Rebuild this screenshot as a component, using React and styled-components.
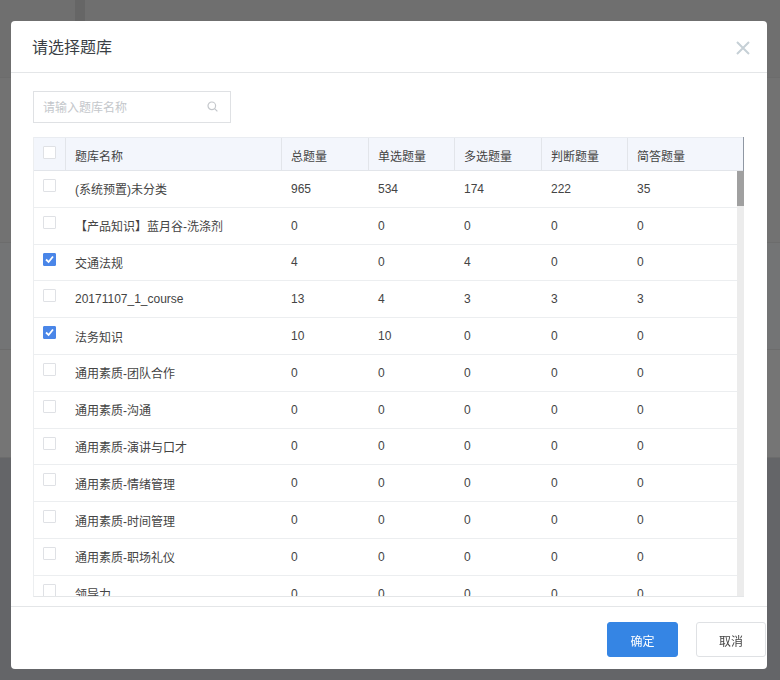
import React from 'react'
import styled, { createGlobalStyle } from 'styled-components'

const GlobalStyle = createGlobalStyle`
	html, body {
		margin: 0;
		padding: 0;
		height: 100%;
		overflow: hidden;
		background: #646568;
	}
	* {
		box-sizing: border-box;
	}
`

const Page = styled.div`
	height: 680px;
	display: flex;
	flex-direction: column;
	background: #646568;
`

const PageSection = styled.div`
	height: ${p => p.$h}px;
	background: ${p => p.$bg};
	border-bottom: 1px solid #6c6c6c;
	padding-left: 73px;
`

const PageStrip = styled.div`
	width: 14px;
	height: 22px;
	background: #666;
	border: solid #6f6f6f;
	border-width: 0 2px;
`

const Dialog = styled.div`
	position: fixed;
	left: 11px;
	top: 21px;
	width: 756px;
	height: 648px;
	background: #fff;
	border-radius: 4px;
	display: flex;
	flex-direction: column;
	font-family: 'Liberation Sans', 'Noto Sans CJK SC', sans-serif;
	color: #333;
`

const DialogHeader = styled.div`
	height: 52px;
	flex: none;
	display: flex;
	align-items: center;
	justify-content: space-between;
	padding: 0 16px 0 21px;
	border-bottom: 1px solid #e4e6e8;
`

const Title = styled.h3`
	margin: 0 0 2px;
	font-size: 16px;
	font-weight: 400;
	color: #3a3f45;
`

const CloseButton = styled.button`
	width: 16px;
	height: 16px;
	padding: 0;
	margin-top: 3px;
	border: 0;
	background: none;
	color: #c6d0d6;
	display: flex;
`

const DialogBody = styled.div`
	flex: 1;
	min-height: 0;
	padding: 18px 22px 9px;
	display: flex;
	flex-direction: column;
	border-bottom: 1px solid #e4e6e8;
`

const SearchBox = styled.div`
	width: 198px;
	height: 32px;
	flex: none;
	border: 1px solid #dfe1e4;
	display: flex;
	align-items: center;
	justify-content: space-between;
	padding: 0 12px 0 9px;
	margin-bottom: 14px;
	color: #c4c7cb;
`

const SearchInput = styled.input`
	width: 140px;
	border: 0;
	outline: 0;
	padding: 2px 0 0;
	font: inherit;
	font-size: 12px;
	color: #333;
	&::placeholder {
		color: #c4c7cb;
		opacity: 1;
	}
`

const SearchIcon = styled.svg`
	margin-bottom: 2px;
`

const TableWrap = styled.div`
	position: relative;
	flex: 1;
	min-height: 0;
	overflow: hidden;
	border-left: 1px solid #eceef0;
	border-bottom: 1px solid #e4e6e8;
	width: 711px;
`

const Row = styled.div`
	display: grid;
	grid-template-columns: 31px 216px 87px 86px 87px 86px 1fr;
	height: ${p => (p.$head ? '34px' : '36.8px')};
	background: ${p => (p.$head ? '#f3f6fc' : '#fff')};
	border-bottom: 1px solid ${p => (p.$head ? '#e2e5ea' : '#eceef0')};
	border-top: ${p => (p.$head ? '1px solid #e9ecf1' : '0')};
	font-size: 12px;
	margin-right: ${p => (p.$head ? '0' : '7px')};
`

const Cell = styled.div`
	display: flex;
	align-items: center;
	padding: 0 0 0 10px;
	white-space: pre;
	color: #444;
`

const HeadCell = styled(Cell)`
	padding: 3px 0 0 9px;
	border-left: 1px solid #e2e5ea;
`

const CheckCell = styled.div`
	padding: 8px 0 0 9px;
`

const Box = styled.span`
	display: flex;
	align-items: center;
	justify-content: center;
	width: 13px;
	height: 13px;
	border-radius: 1px;
	border: 1px solid ${p => (p.$on ? '#4a86e8' : '#dfe1e5')};
	background: ${p => (p.$on ? '#4a86e8' : '#fff')};
	color: #fff;
`

const ScrollTrack = styled.div`
	position: absolute;
	right: 0;
	top: 34px;
	bottom: 0;
	width: 7px;
	background: #ececec;
`

const ScrollThumb = styled.div`
	width: 7px;
	height: 35px;
	background: #a0a0a0;
`

const TopCorner = styled.div`
	position: absolute;
	right: 0;
	top: 0;
	width: 1px;
	height: 34px;
	background: #8f97a3;
`

const DialogFooter = styled.div`
	height: 62px;
	flex: none;
	display: flex;
	justify-content: flex-end;
	align-items: flex-start;
	gap: 18px;
	padding: 15px 1px 0 0;
`

const Button = styled.button`
	width: ${p => (p.$primary ? '71px' : '70px')};
	height: 35px;
	border-radius: 3px;
	border: 1px solid ${p => (p.$primary ? '#3585e4' : '#dfe1e4')};
	background: ${p => (p.$primary ? '#3585e4' : '#fff')};
	color: ${p => (p.$primary ? '#fff' : '#444')};
	font: inherit;
	font-size: 12px;
	padding: 2px 0 0;
`

const rows = [
	['(系统预置)未分类', 965, 534, 174, 222, 35],
	['【产品知识】蓝月谷-洗涤剂', 0, 0, 0, 0, 0],
	['交通法规', 4, 0, 4, 0, 0, true],
	['20171107_1_course', 13, 4, 3, 3, 3],
	['法务知识', 10, 10, 0, 0, 0, true],
	['通用素质-团队合作', 0, 0, 0, 0, 0],
	['通用素质-沟通', 0, 0, 0, 0, 0],
	['通用素质-演讲与口才', 0, 0, 0, 0, 0],
	['通用素质-情绪管理', 0, 0, 0, 0, 0],
	['通用素质-时间管理', 0, 0, 0, 0, 0],
	['通用素质-职场礼仪', 0, 0, 0, 0, 0],
	['领导力', 0, 0, 0, 0, 0],
]

const heads = ['题库名称', '总题量', '单选题量', '多选题量', '判断题量', '简答题量']

const Check = ({ on }) => (
	<Box $on={on}>
		{on && (
			<svg width="11" height="11" viewBox="0 0 11 11" fill="none" stroke="currentColor" strokeWidth="1.8">
				<path d="M2 5.5 4.6 8 9 2.5" />
			</svg>
		)}
	</Box>
)

const App = () => {
	return (
		<>
			<GlobalStyle />
			<Page>
				<PageSection $h={78} $bg="#6f6f6f">
					<PageStrip />
				</PageSection>
				<PageSection $h={165} $bg="#727272" />
				<PageSection $h={107} $bg="#737475" />
				<PageSection $h={108} $bg="#757575" />
			</Page>
			<Dialog>
				<DialogHeader>
					<Title>请选择题库</Title>
					<CloseButton aria-label="关闭">
						<svg width="16" height="16" viewBox="0 0 16 16" fill="none" stroke="currentColor" strokeWidth="2">
							<path d="M2 2 14 14M14 2 2 14" />
						</svg>
					</CloseButton>
				</DialogHeader>
				<DialogBody>
					<SearchBox>
						<SearchInput placeholder="请输入题库名称" />
						<SearchIcon width="11" height="11" viewBox="0 0 11 11" fill="none" stroke="currentColor" strokeWidth="1.2">
							<circle cx="4.8" cy="4.8" r="3.8" />
							<path d="M7.6 7.6 10.4 10.4" />
						</SearchIcon>
					</SearchBox>
					<TableWrap>
						<Row $head>
							<CheckCell>
								<Check />
							</CheckCell>
							{heads.map(h => (
								<HeadCell key={h}>{h}</HeadCell>
							))}
						</Row>
						{rows.map(r => (
							<Row key={r[0]}>
								<CheckCell>
									<Check on={r[6]} />
								</CheckCell>
								{r.slice(0, 6).map((v, i) => (
									<Cell key={i}>{v}</Cell>
								))}
							</Row>
						))}
						<TopCorner />
						<ScrollTrack>
							<ScrollThumb />
						</ScrollTrack>
					</TableWrap>
				</DialogBody>
				<DialogFooter>
					<Button $primary>确定</Button>
					<Button>取消</Button>
				</DialogFooter>
			</Dialog>
		</>
	)
}

export default App
